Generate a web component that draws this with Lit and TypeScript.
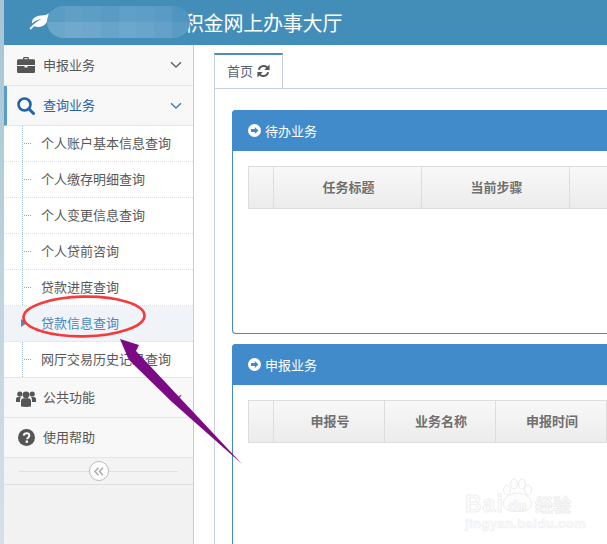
import { LitElement, html, css, svg } from "lit";
import { customElement } from "lit/decorators.js";

const chevron = () => html`<svg class="chev" width="12" height="8" viewBox="0 0 12 8"><path d="M1 1.2 L6 6 L11 1.2" fill="none" stroke="currentColor" stroke-width="1.5"/></svg>`;

const briefcase = html`<svg width="18" height="16" viewBox="0 0 18 16"><path fill="#555" d="M6 2.2V1.4C6 .7 6.6 0 7.4 0h3.2C11.4 0 12 .7 12 1.4v.8h4.4c.9 0 1.6.7 1.6 1.6V8H0V3.800c0-.9.7-1.6 1.600-1.600H6zm1.300 0h3.400v-.9H7.300v.9z"/><path fill="#555" d="M0 9h7.500v1.400h3V9H18v5.400c0 .9-.7 1.600-1.600 1.600H1.600C.7 16 0 15.300 0 14.400V9z"/></svg>`;
const search = html`<svg width="18" height="18" viewBox="0 0 18 18"><circle cx="7.500" cy="7.500" r="6" fill="none" stroke="#1d64a8" stroke-width="2.600"/><path d="M11.800 11.800 L16.500 16.500" stroke="#1d64a8" stroke-width="3" stroke-linecap="round"/></svg>`;
const users = html`<svg width="20" height="18" viewBox="0 0 20 18"><g fill="#555"><circle cx="3.800" cy="5" r="2.600"/><circle cx="16.200" cy="5" r="2.600"/><circle cx="10" cy="5.800" r="3.400"/><path d="M0 13V10c0-1 .8-2 2-2h3c-.6.800-1 1.800-1 3v2H0zM20 13v-3c0-1-.8-2-2-2h-3c.6.800 1 1.800 1 3v2h4z"/><path d="M5 12c0-1.600 1.200-2.800 2.600-2.800h4.800c1.400 0 2.600 1.200 2.600 2.800v5.500c-3 .6-7 .6-10 0V12z"/></g></svg>`;
const help = html`<svg width="17" height="17" viewBox="0 0 16 16"><circle cx="8" cy="8" r="8" fill="#555"/><path d="M5.400 6.200C5.600 4.800 6.600 4 8.100 4c1.500 0 2.600.9 2.600 2.100 0 1.900-2.100 1.900-2.100 3.500" fill="none" stroke="#fff" stroke-width="1.800"/><rect x="7.200" y="10.800" width="2.200" height="2.200" fill="#fff"/></svg>`;
const refresh = html`<svg width="13" height="14" viewBox="0 0 13 14"><g fill="none" stroke="#555" stroke-width="2"><path d="M1.800 5.800A5 5 0 0 1 10.400 3.700"/><path d="M11.200 8.200A5 5 0 0 1 2.600 10.300"/></g><path fill="#555" d="M12.600 .6V6H7.300zM.4 13.400V8h5.300z"/></svg>`;
const arrowCircle = html`<svg width="13" height="13" viewBox="0 0 13 13"><circle cx="6.500" cy="6.500" r="6.500" fill="#fff"/><path fill="#428bca" d="M6.800 2.900 10.400 6.500 6.800 10.100V8H3V5h3.800z"/></svg>`;
const leaf = html`<svg width="20" height="17" viewBox="0 0 20 17"><path fill="#fff" d="M19.500 0C18 2 16 2.200 12 2.500 5.500 3 2.500 6.500 3 10.600 5.500 8 9 6.400 12.800 5.800 9.500 7.600 5 10.400 .5 15.200L1.700 16.800C3 15.300 4.300 14 5.300 13.300 9 14.800 14.500 14 17 10.300 19 7.200 19.800 3.500 19.500 0z"/></svg>`;

const blocks = ["#5a9dc4","#619fc6","#5d9ec5","#5a9bc3","#609fc6","#5c9ec5","#5a9bc3","#4f95bf",
"#6ba6cb","#71a9cd","#6ea7cc","#68a3c9","#6ea7cc","#69a4ca","#64a1c8","#5a9bc3"];

@customElement("app-root")
export class AppRoot extends LitElement {
  static styles = css`
    :host { display: block; width: 607px; height: 544px; overflow: hidden; position: relative; background: #fff;
      font-family: "Noto Sans CJK SC", "Noto Sans", sans-serif; font-size: 13px; color: #585858; }
    .page { display: flex; height: 544px; }
    .strip { width: 4px; flex: none; background: linear-gradient(#a5c5d5, #d6e0e6); }
    .col { flex: 1; min-width: 0; display: flex; flex-direction: column; }
    .header { height: 45px; flex: none; background: #438eb9; display: flex; align-items: center; padding-left: 25px; gap: 115px; position: relative; color: #fff; font-size: 20px; white-space: nowrap; }
    .header svg { flex: none; margin-top: -2px; }
    .title { margin-top: -1px; letter-spacing: -.2px; }
    .mosaic { position: absolute; left: 43px; top: 6px; width: 143px; height: 32px; border-radius: 16px; overflow: hidden; display: grid; grid-template-columns: repeat(8, 1fr); grid-template-rows: 1fr 1fr; }
    .body { flex: 1; display: flex; min-height: 0; }
    .side { width: 189px; flex: none; background: #f2f2f2; border-right: 1px solid #cccccc; }
    .item { height: 37px; padding: 0 0 2px 39px; background: #f8f8f8; border-bottom: 1px solid #e5e5e5; display: flex; align-items: center; position: relative; }
    .item.first { height: 38px; }
    .icon-slot { position: absolute; left: 6px; top: 0; width: 32px; height: 100%; display: flex; align-items: center; justify-content: center; }
    .chev { position: absolute; right: 11px; top: 16px; color: #666; }
    .item.open { color: #1d64a8; border-left: 3px solid #5b9bc9; padding-left: 36px; }
    .item.open .icon-slot { left: 3px; }
    .item.open .chev { color: #4a7fb0; }
    .sub { position: relative; background: #fff; border-bottom: 1px solid #e5e5e5; }
    .sub::before { content: ""; position: absolute; left: 18px; top: 0; bottom: 0; border-left: 1px dotted #9dbdd6; }
    .sub a { display: flex; align-items: center; height: 33px; padding: 0 0 2px 37px; border-bottom: 1px dotted #e0e0e0; position: relative; }
    .sub a:last-child { border-bottom: 0; }
    .sub a::before { content: ""; position: absolute; left: 20px; top: 17px; width: 7px; border-top: 1px dotted #7fa8c8; }
    .sub a.active { background: #f0f4f9; color: #4b88b9; }
    .sub a.active::before { left: 17px; top: 13px; width: 0; border: 0; border-left: 6px solid #5b87ab; border-top: 4px solid transparent; border-bottom: 4px solid transparent; }
    .collapse { height: 26px; background: #f3f3f3; border-bottom: 1px solid #e0e0e0; position: relative; display: flex; align-items: center; justify-content: center; }
    .collapse::before { content: ""; position: absolute; left: 15px; right: 15px; top: 13px; border-top: 1px solid #e0e0e0; }
    .collapse span { position: relative; width: 18px; height: 18px; border: 1px solid #bbb; border-radius: 50%; background: #fff; display: flex; align-items: center; justify-content: center; }
    .main { flex: 1; min-width: 0; padding: 8px 0 0 20px; overflow: hidden; display: flex; flex-direction: column; }
    .tabs { flex: none; border-bottom: 1px solid #c5d0dc; box-sizing: border-box; height: 36px; display: flex; }
    .tab { width: 69px; height: 35px; box-sizing: border-box; background: #fff; border: 1px solid #c5d0dc; border-top: 2px solid #4c8fbd; border-bottom: 0; display: flex; align-items: center; gap: 4px; padding: 0 0 2px 12px; color: #576373; }
    .content { flex: 1; border-left: 1px solid #c5d0dc; padding: 21px 0 0 17px; display: flex; flex-direction: column; gap: 10px; }
    .panel { width: 500px; flex: none; border: 1px solid #428bca; border-right: 0; border-radius: 4px 0 0 4px; box-sizing: border-box; }
    .panel.one { height: 224px; }
    .panel.two { height: 260px; }
    .ph { height: 41px; margin: -1px 0 0 -1px; background: #428bca; color: #fff; display: flex; align-items: center; gap: 4px; padding: 0 0 1px 16px; box-sizing: border-box; border-radius: 4px 0 0 0; }
    .tbl { margin: 15px 0 0 15px; height: 43px; box-sizing: border-box; border: 1px solid #dddddd; display: flex; background: linear-gradient(#f8f8f8, #ececec); font-weight: 700; color: #707070; }
    .tbl div { flex: none; border-right: 1px solid #dddddd; display: flex; align-items: center; justify-content: center; box-sizing: border-box; padding: 0 0 2px 2px; }
    .over { position: absolute; left: 0; top: 0; pointer-events: none; }
    .wm { position: absolute; left: 465px; top: 478px; width: 140px; height: 54px; color: #fcfcfc; pointer-events: none; }
    .wm b { position: absolute; line-height: 1; font-family: "Liberation Sans", sans-serif; -webkit-text-stroke: 1px #f0f0f0; }
    .wm svg { position: absolute; left: 36px; top: 0; }
    .wm .bai { left: 0; top: 15px; font-size: 23px; letter-spacing: 1px; }
    .wm .du { left: 43px; top: 20px; font-size: 15px; -webkit-text-stroke: .7px #ececec; }
    .wm .jy { left: 0; top: 39px; font-size: 13px; letter-spacing: .4px; -webkit-text-stroke: .7px #f0f0f0; }
    .wm .cn { left: 70px; top: 17px; font-family: "Noto Sans CJK SC", sans-serif; font-size: 18px; -webkit-text-stroke: .8px #ececec; }
  `;

  private cols1 = [25, 148, 148, 148];
  private cols2 = [25, 111, 111, 111, 111];

  render() {
    const row = (w: number[], t: string[]) => html`<div class="tbl">${w.map((x, i) => html`<div style="width:${x}px">${t[i] ?? ""}</div>`)}</div>`;
    return html`
      <div class="page">
        <div class="strip"></div>
        <div class="col">
          <div class="header">
            ${leaf}
            <span class="title">公积金网上办事大厅</span>
            <div class="mosaic">${blocks.map((c) => html`<i style="background:${c}"></i>`)}</div>
          </div>
          <div class="body">
            <nav class="side">
              <div class="item first"><span class="icon-slot">${briefcase}</span>申报业务${chevron()}</div>
              <div class="item open"><span class="icon-slot">${search}</span>查询业务${chevron()}</div>
              <div class="sub">
                <a>个人账户基本信息查询</a>
                <a>个人缴存明细查询</a>
                <a>个人变更信息查询</a>
                <a>个人贷前咨询</a>
                <a>贷款进度查询</a>
                <a class="active">贷款信息查询</a>
                <a>网厅交易历史记录查询</a>
              </div>
              <div class="item"><span class="icon-slot">${users}</span>公共功能${chevron()}</div>
              <div class="item"><span class="icon-slot">${help}</span>使用帮助</div>
              <div class="collapse"><span><svg width="10" height="9" viewBox="0 0 10 9"><path d="M4.500 .8 1 4.500 4.500 8.200M9 .8 5.500 4.500 9 8.200" fill="none" stroke="#aaa" stroke-width="1.500"/></svg></span></div>
            </nav>
            <main class="main">
              <div class="tabs"><div class="tab">首页 ${refresh}</div></div>
              <div class="content">
                <section class="panel one">
                  <div class="ph">${arrowCircle}待办业务</div>
                  ${row(this.cols1, ["", "任务标题", "当前步骤", ""])}
                </section>
                <section class="panel two">
                  <div class="ph">${arrowCircle}申报业务</div>
                  ${row(this.cols2, ["", "申报号", "业务名称", "申报时间", ""])}
                </section>
              </div>
            </main>
          </div>
        </div>
      </div>
      <div class="wm">
        <svg width="33" height="36" viewBox="0 0 33 36"><g fill="#fdfdfd" stroke="#ececec" stroke-width="1"><ellipse cx="6" cy="12" rx="3.500" ry="5"/><ellipse cx="13" cy="6" rx="3.500" ry="5"/><ellipse cx="21" cy="6" rx="3.500" ry="5"/><ellipse cx="27" cy="12" rx="3.500" ry="5"/><path d="M16.500 15c6 0 14 4 14 10.500 0 4.500-3 8-14 8s-14-3.500-14-8C2.500 19 10.500 15 16.500 15z"/></g></svg>
        <b class="bai">Bai</b><b class="du">du</b><b class="cn">经验</b><b class="jy">jingyan.baidu.com</b>
      </div>
      <svg class="over" width="607" height="544" viewBox="0 0 607 544">
        ${svg`<ellipse cx="84" cy="316.500" rx="60.500" ry="19.800" transform="rotate(-1 84 316.500)" fill="none" stroke="#f23c3e" stroke-width="2.700"/>
        <polygon fill="#7b0a85" points="120,339 139,345 136,351 242,464 172,402 131,362 128,358"/>`}
      </svg>
    `;
  }
}
